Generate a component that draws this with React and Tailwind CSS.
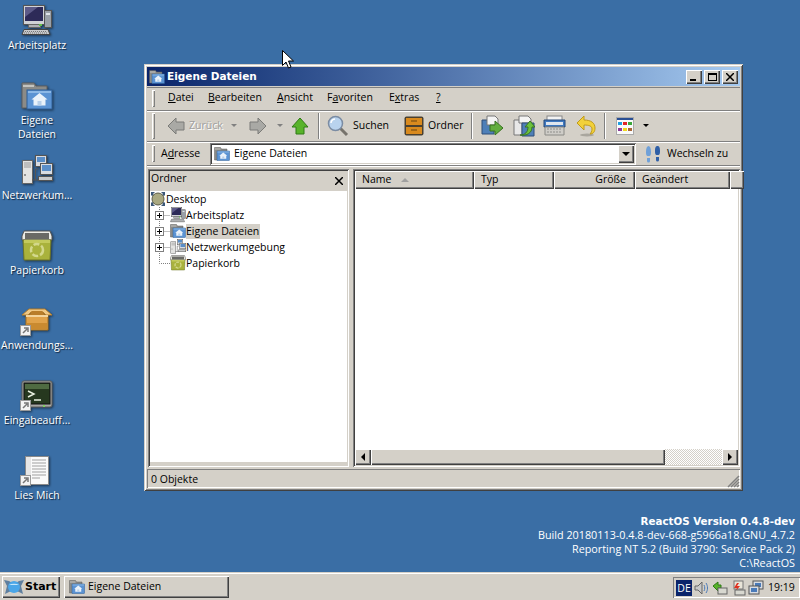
const raised = "bg-[#d4d0c8] shadow-[inset_1px_1px_0_#fff,inset_-1px_-1px_0_#404040,inset_-2px_-2px_0_#808080]";
const sunken = "shadow-[inset_1px_1px_0_#808080,inset_-1px_-1px_0_#fff,inset_2px_2px_0_#404040,inset_-2px_-2px_0_#d4d0c8]";
const boldFont = "font-bold font-['DejaVu_Sans',sans-serif]";

function FolderHome({ size = 32 }) {
  return (
    <svg width={size} height={size} viewBox="0 0 32 32" className="shrink-0">
      <path d="M1 3h12l2 3h11v6H8v16H1z" fill="#8b8b88" stroke="#5f5f5f" />
      <path d="M2 6h11" stroke="#c4c4c0" strokeWidth="2" />
      <rect x="6" y="10" width="25" height="19" fill="#5b93d3" stroke="#2f5f96" />
      <rect x="7" y="11" width="23" height="2" fill="#8cb8e6" />
      <path d="M18.500 13l8 6.500h-2v6h-12v-6h-2z" fill="#eaf2fa" />
      <rect x="16.500" y="21" width="4" height="4.500" fill="#b8d0ea" />
    </svg>
  );
}

function Computer({ size = 32 }) {
  return (
    <svg width={size} height={size} viewBox="0 0 32 32" className="shrink-0">
      <rect x="23.500" y="5.500" width="7" height="17" fill="#9aa0a8" stroke="#555" />
      <rect x="25" y="8" width="4" height="2" fill="#dfe3e8" />
      <rect x="2.500" y="0.500" width="21" height="19" fill="#d0d2d6" stroke="#555" />
      <rect x="4" y="2" width="18" height="14" fill="#2d2a58" />
      <path d="M4 2h13L4 12z" fill="#5c5a88" />
      <rect x="7.500" y="19.500" width="12" height="3" fill="#b0b2b6" stroke="#666" />
      <rect x="18" y="19" width="3" height="2" fill="#62c04a" />
      <path d="M3 24.500h24l2 5H1z" fill="#c8cacc" stroke="#444" />
      <path d="M4 26.500h21M3 28h23" stroke="#777" strokeDasharray="1 1" />
    </svg>
  );
}

function Network({ size = 32 }) {
  return (
    <svg width={size} height={size} viewBox="0 0 32 32" className="shrink-0">
      <rect x="1.500" y="5.500" width="10" height="23" fill="#e4e4e2" stroke="#666" />
      <path d="M3 8h7M3 10h7M3 12h7" stroke="#999" />
      <circle cx="4" cy="20" r="1" fill="#777" />
      <path d="M11 25h8M14.500 25V14h3" stroke="#555" fill="none" />
      <rect x="14.500" y="0.500" width="11" height="11" fill="#d8dce2" stroke="#555" />
      <rect x="16" y="2" width="8" height="5" fill="#5a8ec8" />
      <rect x="19.500" y="8.500" width="12" height="11" fill="#d8dce2" stroke="#555" />
      <rect x="21" y="10" width="9" height="6" fill="#5a8ec8" />
      <rect x="17.500" y="21.500" width="14" height="4" fill="#c8cacc" stroke="#555" />
    </svg>
  );
}

function Trash({ size = 32 }) {
  return (
    <svg width={size} height={size} viewBox="0 0 32 32" className="shrink-0">
      <path d="M1 6l2-5h26l2 5v4H1z" fill="#ecece6" stroke="#555" />
      <rect x="4" y="3" width="24" height="6" fill="#6a6a66" />
      <path d="M2 10h28l-1 20H3z" fill="#a9b23c" stroke="#6d7426" />
      <path d="M3 10h26v3H3z" fill="#c3ca5c" />
      <circle cx="16" cy="20" r="6" fill="none" stroke="#d3d88c" strokeWidth="2.500" strokeDasharray="6 2" />
    </svg>
  );
}

function Package() {
  return (
    <svg width="32" height="32" viewBox="0 0 32 32" className="shrink-0">
      <path d="M5 10h22v15H5z" fill="#e0a24a" stroke="#a5701f" />
      <path d="M6 18h20v6H6z" fill="#c98a30" />
      <path d="M1 10l7-6h16l7 6H25l-3-3H10l-3 3z" fill="#f0c884" stroke="#b57f2c" />
      <path d="M8 10l3-4h10l3 4z" fill="#b97d2a" />
      <path d="M5 10h22v2H5z" fill="#f4d49c" />
    </svg>
  );
}

function Terminal() {
  return (
    <svg width="32" height="32" viewBox="0 0 32 32" className="shrink-0">
      <rect x="1" y="1" width="30" height="26" rx="2" fill="#a8a8a4" stroke="#5c5c5a" />
      <rect x="3" y="3" width="26" height="21" fill="#26381f" stroke="#111" />
      <rect x="4" y="4" width="24" height="5" fill="#4f6b42" />
      <path d="M7 11l6 3-6 3" fill="none" stroke="#e8f0e0" strokeWidth="1.500" />
      <path d="M13 20h7" stroke="#e8f0e0" strokeWidth="1.500" />
      <rect x="22" y="25" width="2" height="2" fill="#7fd060" />
    </svg>
  );
}

function Doc() {
  return (
    <svg width="32" height="32" viewBox="0 0 32 32" className="shrink-0">
      <rect x="4.500" y="1.500" width="23" height="28" fill="#fafafa" stroke="#8a8a8a" />
      <rect x="5" y="2" width="5" height="27" fill="#e6e6e6" />
      <path d="M11 5h14M11 8h14M11 11h14M11 14h14M11 17h14M11 20h14M11 23h8" stroke="#a0a0a0" />
    </svg>
  );
}

function Shortcut() {
  return (
    <svg width="11" height="11" viewBox="0 0 11 11" className="absolute left-[-1px] bottom-[1px]">
      <rect x="0.500" y="0.500" width="10" height="10" fill="#f4f4f4" stroke="#9a9a9a" />
      <path d="M3 8l4-4M4 3h4v4" stroke="#777" strokeWidth="1.500" fill="none" />
    </svg>
  );
}

function DesktopIcon({ label, children, link }) {
  return (
    <div className="h-[75px] flex flex-col items-center text-white text-center leading-[14px] [text-shadow:1px_1px_1px_#10233a]">
      <div className="relative w-[32px] h-[32px] drop-shadow-[1px_1px_1px_rgba(0,0,0,0.5)]">
        {children}
        {link && <Shortcut />}
      </div>
      <div className="mt-[1px] whitespace-pre-line w-[74px]">{label}</div>
    </div>
  );
}

function Gripper({ className = "" }) {
  return <div className={`w-[3px] shrink-0 shadow-[inset_1px_1px_0_#fff,inset_-1px_-1px_0_#808080] ${className}`} />;
}

function Sep() {
  return <div className="w-[2px] h-[26px] shrink-0 border-x border-l-[#808080] border-r-white" />;
}

function Arrow({ dir, color = "#a9a9a5", edge = "#7b7b78" }) {
  const d = dir === "left" ? "M2 10l8-8v4h8v8h-8v4z" : dir === "right" ? "M18 10l-8-8v4H2v8h8v4z" : "M10 2l8 9h-4v7H6v-7H2z";
  return (
    <svg width="20" height="20" viewBox="0 0 20 20" className="shrink-0">
      <path d={d} fill={color} stroke={edge} />
    </svg>
  );
}

function Caret({ color = "border-t-[#808080]" }) {
  return <div className={`w-0 h-0 border-x-[3px] border-x-transparent border-t-[3px] ${color}`} />;
}

function Search() {
  return (
    <svg width="22" height="22" viewBox="0 0 22 22" className="shrink-0">
      <path d="M13 13l7 7" stroke="#77736c" strokeWidth="3" />
      <circle cx="8.500" cy="8.500" r="7" fill="#b9d3ee" stroke="#7b8ca3" strokeWidth="1.500" />
      <path d="M4 8a4.500 4.500 0 0 1 4-4" stroke="#fff" strokeWidth="1.500" fill="none" />
    </svg>
  );
}

function Drawer() {
  return (
    <svg width="20" height="20" viewBox="0 0 20 20" className="shrink-0">
      <rect x="0.500" y="0.500" width="19" height="19" rx="2" fill="#4a4030" />
      <rect x="2" y="2" width="16" height="7" fill="#d98a1e" />
      <rect x="2" y="11" width="16" height="7" fill="#d98a1e" />
      <path d="M7 5h6M7 14h6" stroke="#6b4410" />
    </svg>
  );
}

function MoveTo() {
  return (
    <svg width="22" height="22" viewBox="0 0 22 22" className="shrink-0">
      <path d="M1 5h7l1 2h4v12H1z" fill="#4e7fb8" stroke="#2e4f78" />
      <path d="M6 1h8l3 3v6H6z" fill="#f4f4f4" stroke="#777" />
      <path d="M9 10h5V6l8 7-8 7v-4H9z" fill="#62ad3e" stroke="#397321" />
    </svg>
  );
}

function CopyTo() {
  return (
    <svg width="22" height="22" viewBox="0 0 22 22" className="shrink-0">
      <path d="M1 5h8v15H1z" fill="#e8e8e8" stroke="#777" />
      <path d="M6 1h9l3 3v4H6z" fill="#f4f4f4" stroke="#777" />
      <path d="M9 8h12v13H9z" fill="#4e7fb8" stroke="#2e4f78" />
      <path d="M7 20c5 0 8-3 8-8h-3l5-6 5 6h-3c0 6-5 9-12 8z" fill="#6cc23c" stroke="#397321" />
    </svg>
  );
}

function Shredder() {
  return (
    <svg width="23" height="22" viewBox="0 0 23 22" className="shrink-0">
      <rect x="4" y="1" width="15" height="7" fill="#f2f2f2" stroke="#888" />
      <path d="M1 5h21v7H1z" fill="#3e78c0" stroke="#25497a" />
      <rect x="3" y="7" width="17" height="3" fill="#dfe6ee" />
      <path d="M2 12h19v8H2z" fill="#cfcdc8" stroke="#8a8a86" />
      <path d="M5 13v6M8 13v6M11 13v6M14 13v6M17 13v6" stroke="#8f8f8b" strokeDasharray="2 1" />
    </svg>
  );
}

function Undo() {
  return (
    <svg width="20" height="22" viewBox="0 0 20 22" className="shrink-0">
      <ellipse cx="11" cy="20" rx="7" ry="1.500" fill="#a9a69e" />
      <path d="M1 8l7-7v4c7 0 11 3 11 8 0 4-2 6-5 6 1-1 2-3 2-5 0-3-3-4-8-4v5z" fill="#f2d13a" stroke="#c09a1a" />
    </svg>
  );
}

function Views() {
  return (
    <svg width="18" height="18" viewBox="0 0 18 18" className="shrink-0">
      <rect x="0.500" y="0.500" width="17" height="17" fill="#fafafa" stroke="#aaa" />
      <rect x="1" y="1" width="16" height="2" fill="#2a4f94" />
      <rect x="2" y="5" width="4" height="3" fill="#1e9fe0" />
      <rect x="7" y="5" width="4" height="3" fill="#e02828" />
      <rect x="12" y="5" width="4" height="3" fill="#3aa63a" />
      <rect x="2" y="11" width="4" height="3" fill="#8c3a9a" />
      <rect x="7" y="11" width="4" height="3" fill="#f0d81e" />
      <rect x="12" y="11" width="4" height="3" fill="#a8663a" />
    </svg>
  );
}

function Steps() {
  return (
    <svg width="16" height="18" viewBox="0 0 16 18" className="shrink-0">
      <path d="M1 7c0-4 1-6 2.500-6S6 3 6 7s-1 4-2.500 4S1 11 1 7zM2 13h3v3a1.500 1.500 0 0 1-3 0z" fill="#6fa0d8" />
      <path d="M10 6c0-4 1-5 2.500-5S15 2 15 6s-1 4-2.500 4S10 10 10 6zM11 12h3v3a1.500 1.500 0 0 1-3 0z" fill="#2f5fa6" />
    </svg>
  );
}

function DesktopGlobe() {
  return (
    <svg width="16" height="16" viewBox="0 0 16 16" className="shrink-0">
      <path d="M1 1h4l-2 2 1 1-2 1-1-1zM15 1h-4l2 2-1 1 2 1 1-1zM1 15h4l-2-2 1-1-2-1-1 1zM15 15h-4l2-2-1-1 2-1 1 1z" fill="#3c5878" />
      <circle cx="8" cy="8" r="6" fill="#a9a880" stroke="#5e5e48" />
    </svg>
  );
}

function TreeLink({ box = true, last = false }) {
  return (
    <svg width="20" height="16" viewBox="0 0 20 16" className="shrink-0">
      <path d={last ? "M9.500 0v8.500H20" : "M9.500 0v16M9.500 8.500H20"} stroke="#808080" strokeDasharray="1 1" fill="none" />
      {box && (
        <g>
          <rect x="5.500" y="4.500" width="8" height="8" fill="#fff" stroke="#808080" />
          <path d="M7 8.500h5M9.500 6v5" stroke="#000" />
        </g>
      )}
    </svg>
  );
}

function WinButton({ children }) {
  return <div className={`w-[16px] h-[14px] flex items-center justify-center ${raised}`}>{children}</div>;
}

function Header({ w, className = "", children }) {
  return <div className={`${w} h-[18px] shrink-0 flex items-center px-[7px] ${raised} ${className}`}>{children}</div>;
}

function ScrollBtn({ dir }) {
  return (
    <div className={`w-[16px] h-[16px] shrink-0 flex items-center justify-center ${raised}`}>
      <div className={`w-0 h-0 border-y-[4px] border-y-transparent ${dir === "left" ? "border-r-[4px] border-r-black" : "border-l-[4px] border-l-black"}`} />
    </div>
  );
}

function TreeRow({ link, icon, label, active }) {
  return (
    <div className="h-[16px] flex items-center">
      {link}
      {icon}
      <span className={`pr-[1px] h-[15px] leading-[15px] ${active ? "bg-[#d4d0c8]" : ""}`}>{label}</span>
    </div>
  );
}

const menu = [
  ["w-[40px]", "", "D", "atei"],
  ["w-[69px]", "", "B", "earbeiten"],
  ["w-[50px]", "", "A", "nsicht"],
  ["w-[62px]", "F", "a", "voriten"],
  ["w-[47px]", "E", "x", "tras"],
  ["w-[10px]", "", "?", ""],
];

export default function App() {
  return (
    <div className="w-[800px] h-[600px] overflow-hidden flex flex-col bg-[#3a6ea5] text-[10.5px] text-black font-['Open_Sans',sans-serif]">
      <div className="relative flex-1">
        <div className="absolute left-0 top-[5px] w-[74px]">
          <DesktopIcon label="Arbeitsplatz"><Computer /></DesktopIcon>
          <DesktopIcon label={"Eigene\nDateien"}><FolderHome /></DesktopIcon>
          <DesktopIcon label="Netzwerkum..."><Network /></DesktopIcon>
          <DesktopIcon label="Papierkorb"><Trash /></DesktopIcon>
          <DesktopIcon label="Anwendungs..." link><Package /></DesktopIcon>
          <DesktopIcon label="Eingabeauff..." link><Terminal /></DesktopIcon>
          <DesktopIcon label="Lies Mich" link><Doc /></DesktopIcon>
        </div>

        <div className="absolute right-[5px] top-[514px] text-right text-white leading-[14px]">
          <div className={`${boldFont} text-[10.3px]`}>ReactOS Version 0.4.8-dev</div>
          <div className="text-[10.8px]">Build 20180113-0.4.8-dev-668-g5966a18.GNU_4.7.2</div>
          <div className="text-[10.8px]">Reporting NT 5.2 (Build 3790: Service Pack 2)</div>
          <div className="text-[10.8px]">C:\ReactOS</div>
        </div>

        {/* window */}
        <div className="absolute left-[144px] top-[64px] w-[599px] h-[427px] p-[3px] flex flex-col bg-[#d4d0c8] shadow-[inset_1px_1px_0_#d4d0c8,inset_-1px_-1px_0_#404040,inset_2px_2px_0_#fff,inset_-2px_-2px_0_#808080]">
          <div className={`h-[19px] shrink-0 flex items-center pl-[2px] pr-[2px] bg-gradient-to-r from-[#0a246a] to-[#a6caf0] text-white ${boldFont} text-[10.5px]`}>
            <FolderHome size={16} />
            <span className="ml-[2px] flex-1">Eigene Dateien</span>
            <WinButton><div className="w-[6px] h-[2px] mt-[7px] mr-[2px] bg-black" /></WinButton>
            <div className="w-[2px]" />
            <WinButton><div className="w-[9px] h-[8px] border border-black border-t-2" /></WinButton>
            <div className="w-[2px]" />
            <WinButton><svg width="8" height="8" viewBox="0 0 8 8"><path d="M0 0l8 8M8 0L0 8" stroke="#000" strokeWidth="1.500" /></svg></WinButton>
          </div>

          {/* menu band */}
          <div className="h-[24px] mt-[1px] shrink-0 flex items-center pl-[5px] pb-[2px] border-y border-[#808080]">
            <Gripper className="h-[17px]" />
            <div className="ml-[13px] flex">
              {menu.map(([w, pre, u, rest]) => (
                <div key={u} className={w}>{pre}<span className="underline">{u}</span>{rest}</div>
              ))}
            </div>
          </div>

          {/* toolbar */}
          <div className="h-[31px] shrink-0 flex items-center pl-[5px] pb-[2px] border-t border-t-white border-b border-b-[#808080]">
            <Gripper className="h-[26px]" />
            <div className="ml-[11px]"><Arrow dir="left" /></div>
            <span className="ml-[3px] text-[#a0a0a0] [text-shadow:1px_1px_0_#fff] w-[42px]">Zurück</span>
            <Caret />
            <div className="ml-[11px]"><Arrow dir="right" /></div>
            <div className="ml-[9px]"><Caret /></div>
            <div className="ml-[7px]"><Arrow dir="up" color="#58b32a" edge="#2f7a14" /></div>
            <div className="ml-[8px]"><Sep /></div>
            <div className="ml-[7px]"><Search /></div>
            <span className="ml-[4px] w-[51px]">Suchen</span>
            <Drawer />
            <span className="ml-[4px] w-[43px]">Ordner</span>
            <Sep />
            <div className="ml-[8px]"><MoveTo /></div>
            <div className="ml-[10px]"><CopyTo /></div>
            <div className="ml-[8px]"><Shredder /></div>
            <div className="ml-[10px]"><Undo /></div>
            <div className="ml-[8px]"><Sep /></div>
            <div className="ml-[10px]"><Views /></div>
            <div className="ml-[9px]"><Caret color="border-t-black" /></div>
          </div>

          {/* address band */}
          <div className="h-[24px] shrink-0 flex items-start pl-[5px] pr-[1px] border-t border-t-white border-b border-b-[#808080]">
            <Gripper className="h-[17px] mt-[2px]" />
            <span className="ml-[6px] w-[49px] leading-[21px]">A<span className="underline">d</span>resse</span>
            <div className={`w-[426px] h-[22px] flex items-center bg-white pl-[4px] ${sunken}`}>
              <FolderHome size={16} />
              <span className="ml-[4px] flex-1 pb-[1px]">Eigene Dateien</span>
              <div className={`w-[16px] h-[18px] mr-[2px] flex items-center justify-center ${raised}`}>
                <div className="w-0 h-0 border-x-[4px] border-x-transparent border-t-[4px] border-t-black" />
              </div>
            </div>
            <div className="ml-[9px] mt-[2px] shrink-0"><Steps /></div>
            <span className="ml-[6px] leading-[21px]">Wechseln zu</span>
          </div>

          {/* panes */}
          <div className="flex-1 min-h-0 flex pt-[2px] border-t border-t-white">
            <div className={`w-[201px] ml-[1px] shrink-0 flex flex-col p-[2px] bg-white ${sunken}`}>
              <div className="h-[20px] shrink-0 bg-[#d4d0c8] flex items-center justify-between pl-[1px] pr-[4px]">
                <span className="pb-[5px]">Ordner</span>
                <svg width="8" height="8" viewBox="0 0 8 8"><path d="M0 0l8 8M8 0L0 8" stroke="#000" strokeWidth="1.500" /></svg>
              </div>
              <div className="flex-1 min-h-0">
                <TreeRow icon={<DesktopGlobe />} label="Desktop" />
                <TreeRow link={<TreeLink />} icon={<Computer size={16} />} label="Arbeitsplatz" />
                <TreeRow link={<TreeLink />} icon={<FolderHome size={16} />} label="Eigene Dateien" active />
                <TreeRow link={<TreeLink />} icon={<Network size={16} />} label="Netzwerkumgebung" />
                <TreeRow link={<TreeLink box={false} last />} icon={<Trash size={16} />} label="Papierkorb" />
              </div>
              <div className="h-[3px] shrink-0 bg-[#d4d0c8]" />
            </div>

            <div className={`w-[387px] ml-[4px] shrink-0 flex flex-col p-[2px] bg-white ${sunken}`}>
              <div className="flex h-[18px] shrink-0">
                <Header w="w-[119px]">
                  <span className="w-[39px]">Name</span>
                  <div className="w-0 h-0 border-x-[4px] border-x-transparent border-b-[4px] border-b-[#a0a0a0]" />
                </Header>
                <Header w="w-[80px]">Typ</Header>
                <Header w="w-[81px]" className="justify-end pr-[9px]">Größe</Header>
                <Header w="w-[95px]">Geändert</Header>
                <Header w="w-[8px]" />
              </div>
              <div className="flex-1 min-h-0" />
              <div className="flex h-[16px] shrink-0">
                <ScrollBtn dir="left" />
                <div className={`w-[294px] ${raised}`} />
                <div className="flex-1 bg-[conic-gradient(#fff_25%,#d4d0c8_0_50%,#fff_0_75%,#d4d0c8_0)] bg-[length:2px_2px]" />
                <ScrollBtn dir="right" />
              </div>
            </div>
          </div>

          {/* status bar */}
          <div className="h-[19px] mt-[2px] shrink-0 relative flex items-center pl-[4px] pt-[2px] shadow-[inset_1px_1px_0_#808080,inset_-1px_-1px_0_#fff]">
            0 Objekte
            <svg width="14" height="14" viewBox="0 0 14 14" className="absolute right-0 bottom-0">
              <path d="M13 2L2 13M13 5L5 13M13 8L8 13M13 11L11 13" stroke="#808080" strokeWidth="1.500" />
            </svg>
          </div>
        </div>

        {/* mouse pointer */}
        <svg width="12" height="20" viewBox="0 0 12 20" className="absolute left-[282px] top-[50px]">
          <path d="M0.500 0.500v15l3.500-3.500 2.500 6 2.500-1-2.500-6h5z" fill="#fff" stroke="#000" />
        </svg>
      </div>

      {/* taskbar */}
      <div className="h-[28px] shrink-0 flex items-center bg-[#d4d0c8] shadow-[inset_0_1px_0_#d4d0c8,inset_0_2px_0_#fff]">
        <div className={`ml-[2px] mt-[2px] w-[58px] h-[22px] flex items-center pl-[2px] ${boldFont} text-[11px] ${raised}`}>
          <svg width="20" height="16" viewBox="0 0 20 16" className="shrink-0">
            <path d="M0 1l5 1 5 3 5-3 5-1-3 6 2 8-6-3-3 1-3-1-6 3 2-8z" fill="#5f7f9f" />
            <circle cx="10" cy="8" r="6" fill="#4aa6e8" />
            <path d="M5 6a6 3 0 0 1 10 0" fill="#c4e6fa" />
          </svg>
          <span className="ml-[1px]">Start</span>
        </div>
        <div className={`ml-[4px] mt-[2px] w-[165px] h-[22px] flex items-center pl-[5px] ${raised}`}>
          <FolderHome size={16} />
          <span className="ml-[3px]">Eigene Dateien</span>
        </div>
        <div className="flex-1" />
        <div className="w-[127px] h-[21px] mt-[3px] flex items-center pl-[3px] shadow-[inset_1px_1px_0_#808080,inset_-1px_-1px_0_#fff]">
          <div className="w-[16px] h-[16px] bg-[#0a246a] text-white text-center leading-[16px]">DE</div>
          <svg width="16" height="16" viewBox="0 0 16 16" className="ml-[2px] shrink-0">
            <path d="M1 6h3l4-4v12l-4-4H1z" fill="#c8c8c8" stroke="#666" />
            <path d="M10 5c1 2 1 4 0 6M12 3c2 3 2 7 0 10" stroke="#4a7ab8" fill="none" />
          </svg>
          <svg width="16" height="16" viewBox="0 0 16 16" className="ml-[2px] shrink-0">
            <path d="M1 6l5-4v3h3v3H6v3z" fill="#58b32a" stroke="#2f7a14" />
            <rect x="6" y="8" width="9" height="6" fill="#d8d8d0" stroke="#666" />
          </svg>
          <svg width="16" height="16" viewBox="0 0 16 16" className="ml-[2px] shrink-0">
            <rect x="4" y="1" width="9" height="8" fill="#e8e4d8" stroke="#777" />
            <path d="M7 3l-3 5h3l-2 4 5-6H7l2-3z" fill="#e03020" />
            <rect x="5" y="10" width="10" height="5" fill="#d8d8d0" stroke="#666" />
          </svg>
          <svg width="16" height="16" viewBox="0 0 16 16" className="ml-[2px] shrink-0">
            <rect x="5" y="1" width="10" height="8" fill="#d8dce2" stroke="#555" />
            <rect x="7" y="3" width="6" height="4" fill="#4a7ab8" />
            <rect x="1" y="6" width="10" height="8" fill="#d8dce2" stroke="#555" />
            <rect x="3" y="8" width="6" height="4" fill="#4a7ab8" />
          </svg>
          <span className="ml-[4px]">19:19</span>
        </div>
      </div>
    </div>
  );
}
